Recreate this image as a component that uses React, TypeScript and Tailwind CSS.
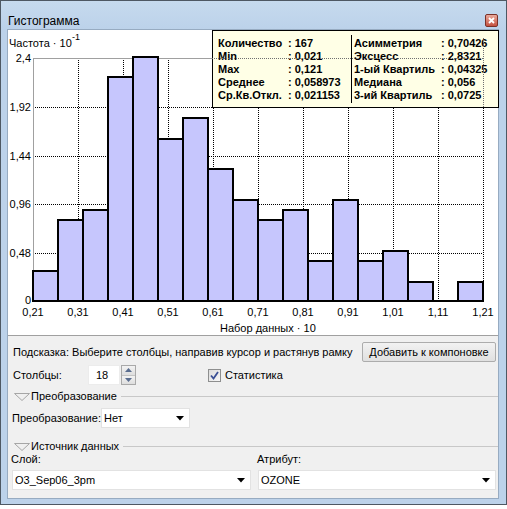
import React from 'react';

const bars = [30, 81, 91, 224, 244, 162, 183, 132, 101, 81, 91, 40, 101, 40, 50, 19, 0, 19];
const yTicks = [
	{ label: '2,4', y: 28 },
	{ label: '1,92', y: 77 },
	{ label: '1,44', y: 126 },
	{ label: '0,96', y: 174 },
	{ label: '0,48', y: 223 },
	{ label: '0', y: 270 },
];
const xTicks = ['0,21', '0,31', '0,41', '0,51', '0,61', '0,71', '0,81', '0,91', '1,01', '1,11', '1,21'];

const leftStats = [
	['Количество', ': 167'],
	['Min', ': 0,021'],
	['Max', ': 0,121'],
	['Среднее', ': 0,058973'],
	['Ср.Кв.Откл.', ': 0,021153'],
];
const rightStats = [
	['Асимметрия', ': 0,70426'],
	['Эксцесс', ': 2,8321'],
	['1-ый Квартиль', ': 0,04325'],
	['Медиана', ': 0,056'],
	['3-ий Квартиль', ': 0,0725'],
];

const FONT = "'Liberation Sans', Arial, sans-serif";

function Chart() {
	const x0 = 25;
	const yb = 271;
	const yt = 28;
	return (
		<svg width={490} height={305} className="block">
			{/* grid */}
			{yTicks.slice(1, 5).map(t => (
				<line key={t.label} x1={x0} x2={475} y1={t.y + 0.5} y2={t.y + 0.5} stroke="#000" strokeDasharray="1 1" />
			))}
			{xTicks.slice(1).map((_, i) => (
				<line
					key={i}
					x1={x0 + 45 * (i + 1) + 0.5}
					x2={x0 + 45 * (i + 1) + 0.5}
					y1={yt}
					y2={yb}
					stroke="#000"
					strokeDasharray="1 1"
				/>
			))}
			<line x1={x0} x2={475} y1={yt + 0.5} y2={yt + 0.5} stroke="#a0a0a0" />
			<line x1={x0 + 0.5} x2={x0 + 0.5} y1={yt} y2={yb} stroke="#a0a0a0" />

			{/* bars */}
			{bars.map((h, i) =>
				h > 0 ? (
					<rect
						key={i}
						x={x0 + 25 * i}
						y={yb - h}
						width={25}
						height={h}
						fill="#c6c6fd"
						stroke="#000"
						strokeWidth={2}
						shapeRendering="crispEdges"
					/>
				) : null,
			)}
			<line x1={x0} x2={475} y1={yb} y2={yb} stroke="#000" strokeWidth={2} shapeRendering="crispEdges" />

			{/* labels */}
			<g fontFamily={FONT} fontSize={11} fill="#000">
				<text x={1} y={17}>Частота · 10</text>
				<text x={64} y={10} fontSize={9}>-1</text>
				{yTicks.map(t => (
					<text key={t.label} x={23} y={t.y + 4} textAnchor="end">
						{t.label}
					</text>
				))}
				{xTicks.map((l, i) => (
					<text key={l} x={x0 + 45 * i} y={286} textAnchor="middle">
						{l}
					</text>
				))}
				<text x={212} y={302}>Набор данных · 10</text>
			</g>
		</svg>
	);
}

function StatsBox() {
	return (
		<div className="absolute left-[204px] top-0 z-10 flex h-[78px] w-[287px] border border-black bg-[#ffffe6] pl-[5px] pt-[6px] text-[11px] font-bold leading-[13px] text-black">
			<div className="grid w-[133px] grid-cols-[70px_1fr] content-start">
				{leftStats.map(([k, v]) => (
					<React.Fragment key={k}>
						<span className="whitespace-nowrap">{k}</span>
						<span className="whitespace-nowrap">{v}</span>
					</React.Fragment>
				))}
			</div>
			<div className="mb-[4px] -mt-[2px] border-l border-black" />
			<div className="grid grid-cols-[87px_1fr] content-start pl-[2px]">
				{rightStats.map(([k, v]) => (
					<React.Fragment key={k}>
						<span className="whitespace-nowrap">{k}</span>
						<span className="whitespace-nowrap">{v}</span>
					</React.Fragment>
				))}
			</div>
		</div>
	);
}

function DropArrow() {
	return (
		<svg width={8} height={5} className="shrink-0">
			<path d="M0 0H8L4 4.5Z" fill="#000" />
		</svg>
	);
}

function Select({ value, className }: { value: string; className: string }) {
	return (
		<div className={`flex h-[20px] items-center justify-between border border-[#e2e2e2] bg-white pl-[2px] pr-[5px] ${className}`}>
			<span>{value}</span>
			<DropArrow />
		</div>
	);
}

function GroupHeader({ title }: { title: string }) {
	return (
		<div className="flex h-[13px] items-center pl-[6px]">
			<svg width={16} height={8} className="mr-[1px] shrink-0">
				<path d="M0.5 0.5H15.5L8 7.5Z" fill="none" stroke="#a6a6a6" />
			</svg>
			<span className="whitespace-nowrap">{title}</span>
			<div className="ml-[4px] h-px flex-1 bg-[#c8c8c8]" />
		</div>
	);
}

export default function App() {
	return (
		<div className="h-[509px] w-[507px] bg-white" style={{ fontFamily: FONT }}>
			<div className="flex h-[505px] w-[507px] flex-col border border-[#4e5863] bg-[#bcd2ea] text-[11px] text-black">
				{/* title bar */}
				<div className="flex h-[28px] items-center bg-gradient-to-b from-[#c6daee] to-[#bcd2ea] pl-[7px] pr-[8px] pt-[11px]">
					<span className="text-[12px]">Гистограмма</span>
					<div className="ml-auto flex h-[13px] w-[13px] items-center justify-center rounded-[2px] border border-[#7b3128] bg-gradient-to-b from-[#e9a99c] to-[#c4503f]">
						<svg width={7} height={7}>
							<path d="M1 1L6 6M6 1L1 6" stroke="#fff" strokeWidth={1.8} />
						</svg>
					</div>
				</div>

				{/* content */}
				<div className="ml-[6px] mr-[7px] flex flex-1 flex-col border border-[#97abc1] bg-[#f0f0f0]">
					<div className="relative h-[306px] border-b border-[#a0a0a0] bg-white">
						<Chart />
						<StatsBox />
						<svg width={490} height={80} className="pointer-events-none absolute left-0 top-0 z-20">
							<line x1={204} x2={475} y1={28.5} y2={28.5} stroke="#707070" strokeDasharray="1 1" />
							<line x1={475.5} x2={475.5} y1={8} y2={78} stroke="#707070" strokeDasharray="1 1" />
						</svg>
					</div>

					<div className="mt-[6px] flex h-[20px] items-center pl-[5px] pr-[2px]">
						<span className="whitespace-nowrap">Подсказка: Выберите столбцы, направив курсор и растянув рамку</span>
						<button className="ml-auto h-[20px] w-[134px] rounded-[2px] border border-[#acacac] bg-gradient-to-b from-[#f2f2f2] to-[#e0e0e0] text-[11px]">
							Добавить к компоновке
						</button>
					</div>

					<div className="mt-[3px] flex h-[20px] items-center pl-[5px]">
						<span className="w-[75px]">Столбцы:</span>
						<div className="flex h-[20px] w-[32px] items-center border border-[#ececec] bg-white pl-[7px]">18</div>
						<div className="ml-[1px] flex h-[20px] w-[15px] flex-col border border-[#a9a9a9]">
							<div className="flex flex-1 items-center justify-center border-b border-[#c4c4c4] bg-gradient-to-b from-[#f3f3f3] to-[#dedede]">
								<svg width={7} height={4}>
									<path d="M0 4H7L3.5 0Z" fill="#5a6d8f" />
								</svg>
							</div>
							<div className="flex flex-1 items-center justify-center bg-gradient-to-b from-[#f3f3f3] to-[#dedede]">
								<svg width={7} height={4}>
									<path d="M0 0H7L3.5 4Z" fill="#5a6d8f" />
								</svg>
							</div>
						</div>
						<div className="ml-[72px] flex h-[13px] w-[13px] items-center justify-center border border-[#8e8f8f] bg-gradient-to-br from-[#dcdcdc] to-[#f7f7f7]">
							<svg width={9} height={9}>
								<path d="M1 4.5L3.5 7.5L8 1" fill="none" stroke="#3a4f95" strokeWidth={1.8} />
							</svg>
						</div>
						<span className="ml-[4px]">Статистика</span>
					</div>

					<div className="mt-[5px]">
						<GroupHeader title="Преобразование" />
					</div>

					<div className="mt-[5px] flex h-[20px] items-center pl-[4px]">
						<span className="w-[89px] whitespace-nowrap">Преобразование:</span>
						<Select value="Нет" className="w-[89px]" />
					</div>

					<div className="mt-[12px]">
						<GroupHeader title="Источник данных" />
					</div>

					<div className="flex h-[13px] items-center pl-[3px]">
						<span className="w-[246px]">Слой:</span>
						<span>Атрибут:</span>
					</div>

					<div className="mt-[4px] flex gap-[7px] pl-[4px] pr-[2px]">
						<Select value="O3_Sep06_3pm" className="w-[239px]" />
						<Select value="OZONE" className="flex-1" />
					</div>
				</div>
				<div className="h-[5px]" />
			</div>
		</div>
	);
}
